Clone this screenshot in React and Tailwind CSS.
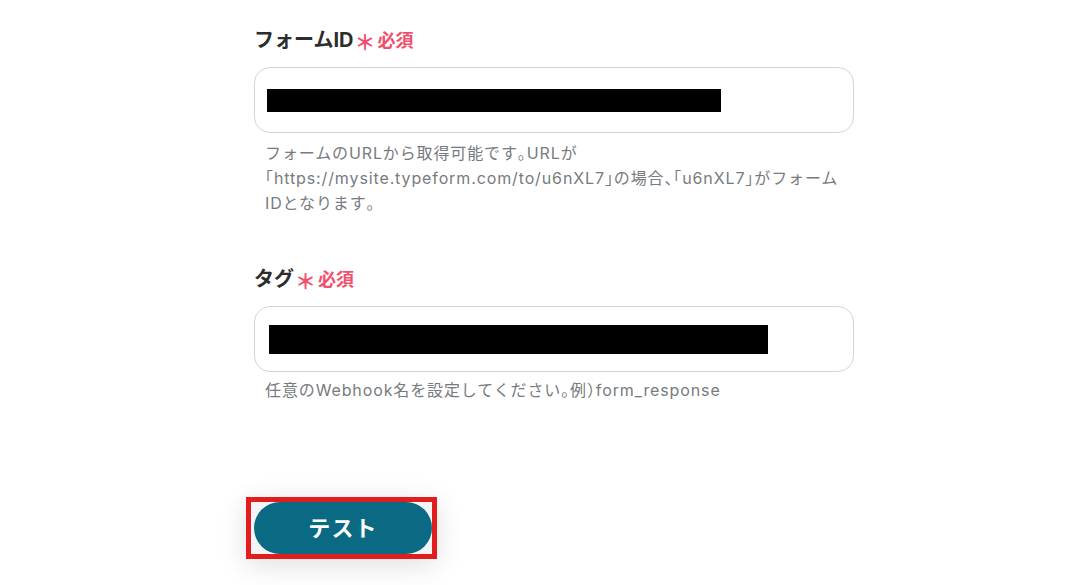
import React from "react";

// full-width punctuation is set half-width, the rest keeps its normal width
const PUNCT = /([「」、。（）])/;

const Txt = ({ children }) =>
  children.split(PUNCT).map((part, i) =>
    PUNCT.test(part) ? (
      <span key={i} className="[font-feature-settings:'halt']">
        {part}
      </span>
    ) : (
      <React.Fragment key={i}>{part}</React.Fragment>
    )
  );

const Label = ({ children }) => (
  <div className="flex items-center h-[24px]">
    <span className="text-[20px] font-bold text-[#2d2d2d]">{children}</span>
    <span className="ml-[1px] text-[21px] font-bold text-[#f0506e] leading-none mt-[4px]">＊</span>
    <span className="ml-[2px] text-[18px] font-bold text-[#f0506e]">必須</span>
  </div>
);

const Field = ({ bar }) => (
  <div className="mt-[15px] h-[66px] w-[600px] rounded-[16px] border border-[#d4d4dc] bg-white flex items-center pl-[12px]">
    <div className={bar} />
  </div>
);

const Help = ({ lines, className = "" }) => (
  <p
    className={`pl-[11px] text-[16px] leading-[25px] tracking-[0.055em] text-[#777b80] whitespace-nowrap ${className}`}
  >
    {lines.map((l, i) => (
      <React.Fragment key={i}>
        {i > 0 && <br />}
        <Txt>{l}</Txt>
      </React.Fragment>
    ))}
  </p>
);

const App = () => {
  return (
    <div
      className="w-[1086px] h-[585px] bg-white overflow-hidden"
      style={{ fontFamily: '"Inter", "Noto Sans CJK JP", sans-serif' }}
    >
      <div className="ml-[254px] w-[600px] pt-[28px]">
        {/* フォームID */}
        <Label>フォームID</Label>
        <Field bar="h-[23px] w-[454px] bg-black" />
        <Help
          className="mt-[8px]"
          lines={[
            "フォームのURLから取得可能です。URLが",
            "「https://mysite.typeform.com/to/u6nXL7」の場合、「u6nXL7」がフォーム",
            "IDとなります。",
          ]}
        />

        {/* タグ */}
        <div className="mt-[51px]">
          <Label>タグ</Label>
        </div>
        <Field bar="h-[29px] w-[499px] bg-black ml-[2px]" />
        <Help
          className="mt-[6px]"
          lines={["任意のWebhook名を設定してください。例）form_response"]}
        />

        {/* Test button */}
        <div className="mt-[94px] -ml-[8px] inline-flex border-[5px] border-[#e11d1d] pl-[3px] shadow-[0_6px_28px_rgba(0,0,0,0.13)] bg-[#f3f4f6]">
          <button className="h-[52px] w-[178px] rounded-full bg-[#0b6a83] text-white text-[22px] font-bold tracking-[0.05em] flex items-center justify-center">
            テスト
          </button>
        </div>
      </div>
    </div>
  );
};

export default App;
